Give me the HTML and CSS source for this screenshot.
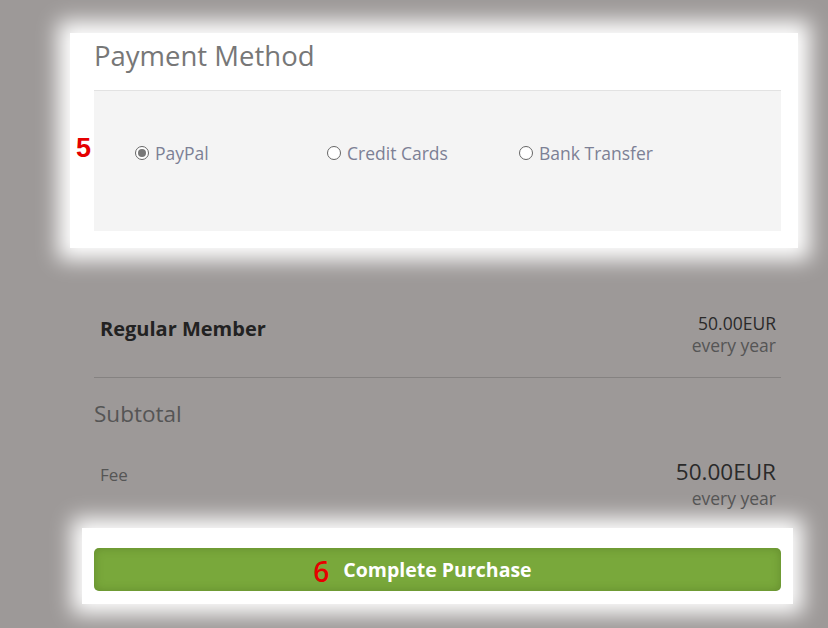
FILE: index.html
```html
<!DOCTYPE html>
<html>
<head>
<meta charset="utf-8">
<link rel="stylesheet" href="styles.css">
</head>
<body>
<div class="page">
  <section class="spot pay-spot">
    <h2 class="title">Payment Method</h2>
    <div class="methods">
      <span class="step step5">5</span>
      <label class="opt"><span class="radio checked"></span>PayPal</label>
      <label class="opt"><span class="radio"></span>Credit Cards</label>
      <label class="opt"><span class="radio"></span>Bank Transfer</label>
    </div>
  </section>

  <div class="item">
    <div class="item-name">Regular Member</div>
    <div class="price">
      <div class="amt">50.00EUR</div>
      <div class="per">every year</div>
    </div>
  </div>

  <h3 class="subtotal">Subtotal</h3>

  <div class="fee">
    <div class="fee-name">Fee</div>
    <div class="price big">
      <div class="amt">50.00EUR</div>
      <div class="per">every year</div>
    </div>
  </div>

  <div class="spot btn-spot">
    <button class="buy"><span class="buy-label"><span class="step step6">6</span>Complete Purchase</span></button>
  </div>
</div>
</body>
</html>
```

FILE: styles.css
```css
* { box-sizing: border-box; }
html, body { margin: 0; padding: 0; }
body {
  background: #9d9998;
  font-family: "Open Sans", "Liberation Sans", sans-serif;
  height: 628px;
  overflow: hidden;
}
.page {
  width: 687px;
  margin-left: 94px;
  padding-top: 39px;
}
.spot {
  background: #fff;
}
.pay-spot {
  margin: 0 -11px 0 -18px;
  padding: 0 11px 11px 18px;
  box-shadow: 0 0 0 6px #fff, 0 0 20px 18px #fff;
}
.title {
  margin: 0;
  font-weight: 400;
  font-size: 27.5px;
  line-height: 34px;
  color: #777;
  padding-bottom: 17px;
  border-bottom: 1px solid #e2e2e2;
}
.methods {
  position: relative;
  background: #f4f4f4;
  height: 140px;
  padding: 50px 0 0 41px;
  display: flex;
  align-items: flex-start;
}
.step {
  font-weight: 700;
  color: #e50000;
}
.step5 {
  position: absolute;
  font-family: "Liberation Sans", Arial, sans-serif;
  left: -18px;
  top: 42px;
  font-size: 27px;
}
.opt {
  width: 192px;
  display: flex;
  align-items: center;
  gap: 6px;
  font-size: 17.5px;
  line-height: 24px;
  color: #7c8095;
}
.radio {
  width: 14px;
  height: 14px;
  border: 1px solid #666;
  border-radius: 50%;
  background: #fff;
  position: relative;
  flex: none;
}
.radio.checked::after {
  content: "";
  position: absolute;
  left: 2px; top: 2px;
  width: 8px; height: 8px;
  border-radius: 50%;
  background: #777;
}
.item {
  display: flex;
  justify-content: space-between;
  align-items: flex-start;
  padding: 70px 5px 21px 6px;
  border-bottom: 1px solid #858281;
}
.item-name {
  font-size: 20px;
  line-height: 27px;
  font-weight: 700;
  color: #222;
  margin-top: 3px;
}
.price { text-align: right; }
.amt { font-size: 17.5px; line-height: 22px; color: #2a2a2a; }
.per { font-size: 17.5px; line-height: 22px; color: #555; }
.subtotal {
  margin: 0;
  font-weight: 400;
  font-size: 22.5px;
  color: #555;
  line-height: 30px;
  padding-top: 21px;
}
.fee {
  display: flex;
  justify-content: space-between;
  align-items: flex-start;
  padding: 28px 5px 0 6px;
}
.fee-name {
  font-size: 17px;
  line-height: 22px;
  color: #555;
  margin-top: 7px;
}
.big .amt { font-size: 22.5px; line-height: 30px; }
.btn-spot {
  margin: 25px -6px 0;
  padding: 14px 6px 7px;
  box-shadow: 0 0 0 6px #fff, 0 0 20px 16px #fff;
}
.buy {
  width: 100%;
  height: 43px;
  border: none;
  border-radius: 5px;
  background: #79a83b;
  box-shadow: inset 0 0 10px rgba(60, 90, 20, 0.35);
  color: #fff;
  font-family: "Open Sans", sans-serif;
  font-weight: 700;
  font-size: 19.5px;
  display: flex;
  align-items: center;
  justify-content: center;
  padding: 0;
}
.buy-label {
  position: relative;
}
.step6 {
  position: absolute;
  right: 100%;
  margin-right: 14px;
  top: -4px;
  font-size: 28px;
  font-weight: 600;
  color: #e60000;
}
```
